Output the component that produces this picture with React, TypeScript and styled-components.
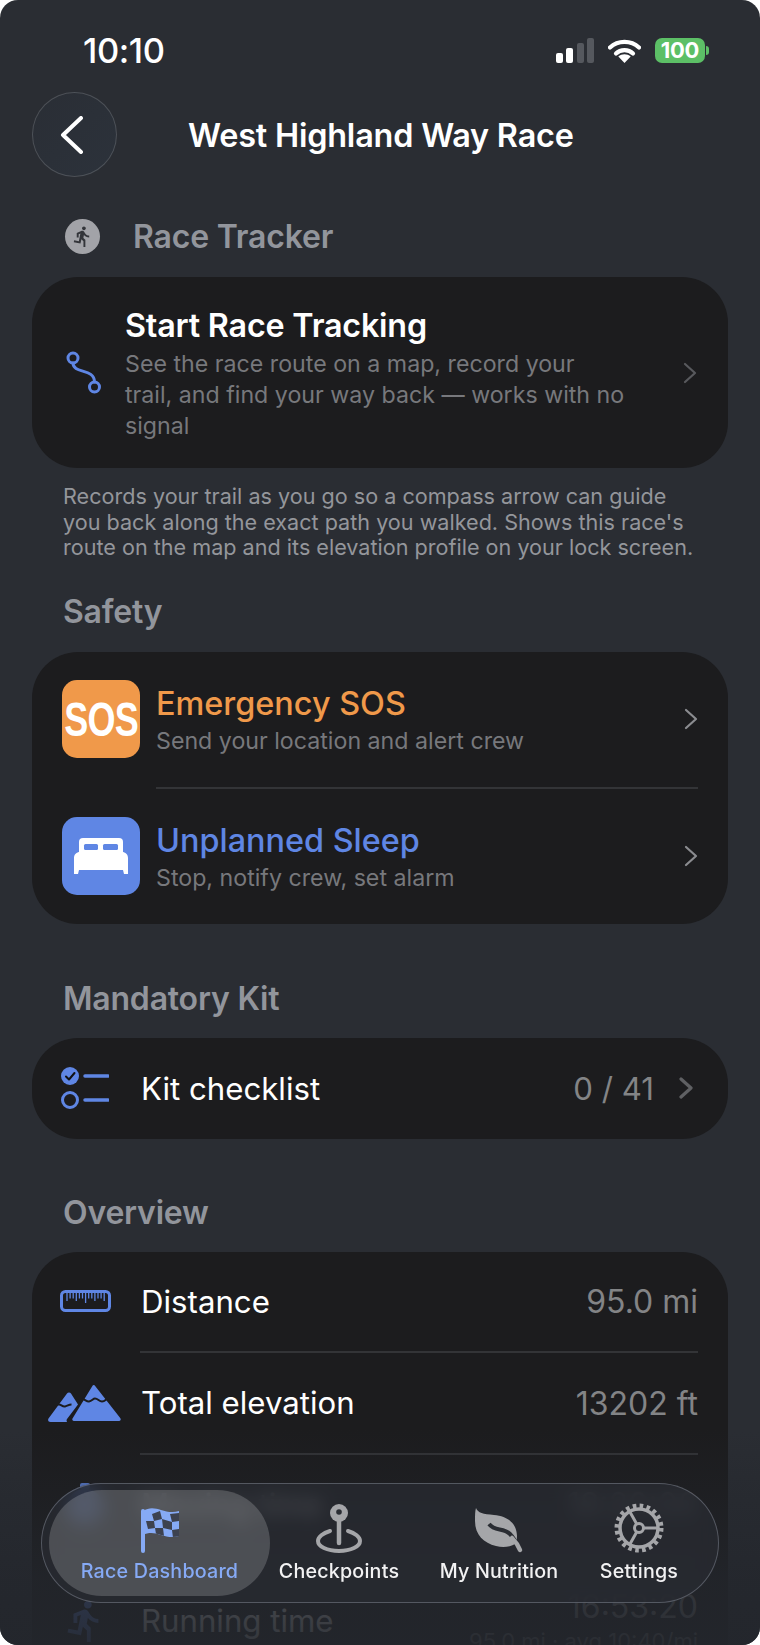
import React, { ReactNode } from 'react';
import styled, { createGlobalStyle } from 'styled-components';
import { MdDirectionsRun } from 'react-icons/md';

const BLUE = '#5f86e4';
const ORANGE = '#f0994a';
const TAB_GREY = '#a5a6a9';

const GlobalStyle = createGlobalStyle`
    html, body {
        margin: 0;
        background: #fff;
    }
    body {
        font-family: 'Inter', 'Liberation Sans', sans-serif;
        -webkit-font-smoothing: antialiased;
    }
`;

const Page = styled.div`
    position: relative;
    width: 760px;
    height: 1645px;
    padding: 0 32px;
    box-sizing: border-box;
    overflow: hidden;
    border-radius: 18px;
    background: #2a2d33;
`;

const StatusBar = styled.div`
    display: flex;
    align-items: center;
    justify-content: space-between;
    height: 100px;
    padding: 0 19px 0 51px;
`;

const Clock = styled.span`
    color: #fff;
    font-size: 34.5px;
    font-weight: 500;
    letter-spacing: -0.4px;
`;

const StatusIcons = styled.div`
    display: flex;
    align-items: center;
    gap: 14px;
`;

const Battery = styled.div`
    position: relative;
    display: flex;
    align-items: center;
    justify-content: center;
    width: 50px;
    height: 25px;
    margin-right: 4px;
    border-radius: 7px;
    background: #5cbf66;
    color: #fff;
    font-size: 22px;
    font-weight: 700;
    letter-spacing: -0.3px;

    &::after {
        content: '';
        position: absolute;
        right: -4px;
        top: 8px;
        width: 3px;
        height: 9px;
        border-radius: 0 3px 3px 0;
        background: #5cbf66;
    }
`;

const NavBar = styled.div`
    display: flex;
    align-items: center;
    gap: 71px;
    margin-top: -8px;
`;

const BackButton = styled.div`
    display: flex;
    align-items: center;
    justify-content: center;
    width: 85px;
    height: 85px;
    padding-right: 6px;
    box-sizing: border-box;
    border: 1.5px solid rgba(255, 255, 255, 0.16);
    border-radius: 50%;
    background: linear-gradient(135deg, #2a2e35, #2c323b);
`;

const Title = styled.h1`
    margin: 2px 0 0;
    color: #fff;
    font-size: 32.4px;
    font-weight: 600;
    letter-spacing: -0.2px;
`;

const SectionHeading = styled.h2<{ $top: number }>`
    display: flex;
    align-items: center;
    gap: 33px;
    height: 40px;
    margin: ${(p) => p.$top}px 0 0 31px;
    color: #92959c;
    font-size: 32px;
    font-weight: 600;
    letter-spacing: -0.2px;
`;

const RunnerBadge = styled.span`
    display: flex;
    align-items: center;
    justify-content: center;
    width: 35px;
    height: 35px;
    margin-left: 2px;
    border-radius: 50%;
    background: #a2a3a8;
    color: #33353a;
`;

const Card = styled.section<{ $top: number }>`
    margin-top: ${(p) => p.$top}px;
    border-radius: 46px;
    background: #1c1c1e;
`;

const TrackerRow = styled.div`
    display: flex;
    align-items: center;
    height: 191px;
    padding: 0 31px 0 32px;
    box-sizing: border-box;
`;

const TrackerText = styled.div`
    flex: 1;
    margin: 2px 0 0 21px;
`;

const TrackerTitle = styled.div`
    margin-bottom: 3px;
    color: #fff;
    font-size: 32.3px;
    font-weight: 600;
    line-height: 40px;
    letter-spacing: -0.2px;
`;

const Subtitle = styled.div`
    color: #77787c;
    font-size: 23.2px;
    line-height: 31px;
`;

const TrackerSubtitle = styled(Subtitle)`
    width: 500px;
`;

const Note = styled.p`
    width: 636px;
    margin: 16px 0 0 31px;
    color: #94969b;
    font-size: 21.6px;
    line-height: 25.6px;
`;

const SafetyRow = styled.div`
    display: flex;
    align-items: center;
    gap: 16px;
    height: 135px;
    padding: 0 30px;
    box-sizing: border-box;
`;

const AppIcon = styled.div<{ $bg: string }>`
    display: flex;
    flex: none;
    align-items: center;
    justify-content: center;
    width: 78px;
    height: 78px;
    overflow: hidden;
    border-radius: 15px;
    background: ${(p) => p.$bg};
`;

const SosLabel = styled.span`
    color: #fff;
    font-family: 'Liberation Sans', sans-serif;
    font-size: 48px;
    font-weight: 700;
    letter-spacing: -1px;
    transform: scaleX(0.75);
`;

const SafetyText = styled.div`
    flex: 1;
    padding-top: 3px;
`;

const SafetyTitle = styled.div<{ $color: string }>`
    margin-bottom: 2px;
    color: ${(p) => p.$color};
    font-size: 32.4px;
    font-weight: 500;
    line-height: 40px;
`;

const Divider = styled.div<{ $left: number }>`
    height: 2px;
    margin: 0 30px 0 ${(p) => p.$left}px;
    background: #333437;
`;

const ListRow = styled.div<{ $height: number }>`
    display: flex;
    align-items: center;
    height: ${(p) => p.$height}px;
    padding-right: 30px;
`;

const IconSlot = styled.div`
    display: flex;
    flex: none;
    align-items: center;
    justify-content: center;
    width: 109px;
    padding-right: 3px;
    box-sizing: border-box;
`;

const RowLabel = styled.div`
    flex: 1;
    padding-top: 1px;
    color: #fff;
    font-size: 31.2px;
    line-height: 40px;
`;

const RowValue = styled.div`
    padding-top: 1px;
    color: #838486;
    font-size: 32px;
    text-align: right;
`;

const KitValue = styled(RowValue)`
    font-size: 31.2px;
`;

const RowValueSub = styled.div`
    color: #838486;
    font-size: 22px;
    line-height: 30px;
    text-align: right;
`;

const KitChevron = styled.span`
    display: flex;
    margin: 0 5px 0 25px;
`;

const BottomFade = styled.div`
    position: absolute;
    left: 0;
    right: 0;
    bottom: 0;
    height: 215px;
    background: linear-gradient(
        to bottom,
        rgba(34, 37, 43, 0) 0%,
        rgba(34, 37, 43, 0.35) 30%,
        rgba(35, 38, 44, 0.82) 70%,
        rgba(35, 38, 44, 0.93) 100%
    );
`;

const TabBar = styled.nav`
    position: absolute;
    left: 41px;
    bottom: 42px;
    display: flex;
    align-items: center;
    width: 678px;
    height: 120px;
    padding: 0 7px;
    box-sizing: border-box;
    border: 1.5px solid rgba(150, 156, 170, 0.42);
    border-radius: 60px;
    background: rgba(40, 43, 50, 0.72);
    backdrop-filter: blur(9px);
`;

const TabItem = styled.div<{ $width: number; $active?: boolean }>`
    display: flex;
    flex: none;
    flex-direction: column;
    align-items: center;
    justify-content: flex-end;
    width: ${(p) => p.$width}px;
    height: 106px;
    padding-bottom: 13px;
    box-sizing: border-box;
    border-radius: 53px;
    background: ${(p) => (p.$active ? 'rgba(255, 255, 255, 0.18)' : 'transparent')};
    color: ${(p) => (p.$active ? '#86aaf5' : '#f2f2f3')};
    font-size: 19.7px;
    font-weight: 500;
    letter-spacing: 0.2px;
    white-space: nowrap;
`;

const TabIcon = styled.div`
    display: flex;
    align-items: flex-end;
    justify-content: center;
    height: 50px;
    margin-bottom: 6px;
`;

const Chevron = ({ color = '#58595d', width = 2.2 }: { color?: string; width?: number }) => (
    <svg width="14" height="22" viewBox="0 0 14 22" fill="none">
        <path d="M2 2l10 9-10 9" stroke={color} strokeWidth={width} strokeLinecap="round" strokeLinejoin="round" />
    </svg>
);

const SignalIcon = () => (
    <svg width="38" height="25" viewBox="0 0 38 25">
        <rect x="0" y="15" width="7" height="10" rx="2" fill="#fff" />
        <rect x="10" y="10" width="7" height="15" rx="2" fill="#fff" />
        <rect x="21" y="5" width="7" height="20" rx="2" fill="#55585e" />
        <rect x="31" y="0" width="7" height="25" rx="2" fill="#55585e" />
    </svg>
);

const WifiIcon = () => (
    <svg width="33" height="25" viewBox="0 0 33 25" fill="none">
        <path d="M2 9.500C10 2 23 2 31 9.500" stroke="#fff" strokeWidth="4.200" strokeLinecap="round" />
        <path d="M8 15.500C12.500 11 20.500 11 25 15.500" stroke="#fff" strokeWidth="4.200" strokeLinecap="round" />
        <path d="M16.500 25l-6.200-6.400c3.400-3 9-3 12.400 0z" fill="#fff" />
    </svg>
);

const RouteIcon = () => (
    <svg width="40" height="46" viewBox="0 0 40 46" fill="none" stroke={BLUE} strokeWidth="3">
        <circle cx="9" cy="8" r="5" />
        <circle cx="30.500" cy="37" r="5" />
        <path d="M9 13c0 11 21.500 5 21.500 19" strokeLinecap="round" />
    </svg>
);

const BedIcon = () => (
    <svg width="54" height="36" viewBox="0 0 54 36">
        <path d="M9 0h36a4 4 0 0 1 4 4v12H5V4a4 4 0 0 1 4-4z" fill="#fff" />
        <rect x="10" y="6" width="14" height="6" rx="1.500" fill={BLUE} />
        <rect x="29" y="6" width="15" height="6" rx="1.500" fill={BLUE} />
        <path d="M6 14h42c3.500 0 6 2.500 6 6v16h-4l-1-4H5l-1 4H0V20c0-3.500 2.500-6 6-6z" fill="#fff" />
    </svg>
);

const ChecklistIcon = () => (
    <svg width="48" height="44" viewBox="0 0 48 44" fill="none">
        <circle cx="9" cy="10" r="9" fill={BLUE} />
        <path d="M5 10.500l3 3 5.500-6.500" stroke="#111" strokeWidth="2" strokeLinecap="round" strokeLinejoin="round" />
        <circle cx="9" cy="34" r="7.500" stroke={BLUE} strokeWidth="3" />
        <path d="M24 10h23M24 34h23" stroke={BLUE} strokeWidth="3.500" strokeLinecap="round" />
    </svg>
);

const RulerIcon = () => (
    <svg width="51" height="22" viewBox="0 0 51 22" fill="none" stroke={BLUE}>
        <rect x="1.500" y="1.500" width="48" height="19" rx="4" strokeWidth="3" />
        {Array.from({ length: 13 }, (_, i) => (
            <path key={i} d={`M${7 + i * 3.1} 3v${i === 6 ? 10 : i % 3 === 0 ? 8 : 5.5}`} strokeWidth="1.300" />
        ))}
    </svg>
);

const MountainsIcon = () => (
    <svg width="74" height="38" viewBox="0 0 74 38">
        <path
            d="M19 9.500a2.500 2.500 0 0 1 4 0l7 11-11 14.500c-.8 1-.4 3 .5 3H2.500c-2 0-3-1.500-2-3.500z"
            fill={BLUE}
        />
        <path
            d="M43.500 1.500a2.500 2.500 0 0 1 4.500 0l25 32c1.500 2 .5 4.500-2 4.500H26c-2.500 0-3.500-2.500-2-4.500z"
            fill={BLUE}
            stroke="#1c1c1e"
            strokeWidth="2"
        />
        <path
            d="M33 16c3-2.500 5 2 8 1.500 3-.5 4-3 6-3 3 0 4 3 7 3s3.500-2 5-2.500M10 21c2-2 4 2 7 1.500 2-.5 4-2 6.500-2"
            fill="none"
            stroke="#1c1c1e"
            strokeWidth="2"
        />
    </svg>
);

const StopwatchIcon = () => (
    <svg width="38" height="42" viewBox="0 0 38 42">
        <rect x="14" y="0" width="10" height="6" rx="2" fill={BLUE} />
        <circle cx="19" cy="24" r="18" fill={BLUE} />
        <path d="M19 14v11l7 4" fill="none" stroke="#1c1c1e" strokeWidth="3" strokeLinecap="round" />
    </svg>
);

const FlagIcon = () => (
    <svg width="42" height="46" viewBox="0 0 42 46">
        <defs>
            <clipPath id="flag-cloth">
                <path d="M4 4c6-4 12-3 18-1s12 3 18 1v25c-6 2-12 1-18-1s-12-3-18 0z" />
            </clipPath>
        </defs>
        <path d="M4 4c6-4 12-3 18-1s12 3 18 1v25c-6 2-12 1-18-1s-12-3-18 0z" fill="#86aaf5" />
        <g clipPath="url(#flag-cloth)" fill="#3d4250">
            <path d="M13 7l8-3 2 8-8 2zM31 7l9-1v8l-7 1zM7 14l8 0 1 7-7 1zM23 12l10 3 0 8-9-2zM16 21l8 0 1 8-8-2zM33 23l7-1v8l-6 1z" />
        </g>
        <path d="M4 4v40" stroke="#86aaf5" strokeWidth="4" strokeLinecap="round" />
    </svg>
);

const PinIcon = () => (
    <svg width="46" height="49" viewBox="0 0 46 49" fill="none">
        <path d="M14 27C7 29 2 33 2 37c0 5.500 9 10 21 10s21-4.500 21-10c0-4-5-8-12-10" stroke={TAB_GREY} strokeWidth="4" strokeLinecap="round" />
        <path d="M23 14v25" stroke={TAB_GREY} strokeWidth="4.500" strokeLinecap="round" />
        <circle cx="23" cy="9" r="9" fill={TAB_GREY} />
        <circle cx="23" cy="8" r="2.800" fill="#2a2d33" />
    </svg>
);

const LeafIcon = () => (
    <svg width="50" height="46" viewBox="0 0 50 46" fill="none">
        <path
            d="M2 1c2 5 7 6 18 7 14 1 23 9 23 21 0 4-1 6-2 8-5 3-12 4-19 2C10 36 1 28 1 14 1 8 1 4 2 1z"
            fill={TAB_GREY}
        />
        <path d="M15 17c6 8 14 3 21 10 3 3 6 8 9 14" stroke="#2a2d33" strokeWidth="4" />
        <path d="M38 31c3 3 6 7 8 12" stroke={TAB_GREY} strokeWidth="4.500" strokeLinecap="round" />
    </svg>
);

const GearIcon = () => (
    <svg width="50" height="50" viewBox="0 0 50 50" fill="none" stroke={TAB_GREY}>
        <circle cx="25" cy="25" r="19" strokeWidth="3.500" />
        <circle cx="25" cy="25" r="22" strokeWidth="5" strokeDasharray="3.600 3.310" />
        <circle cx="25" cy="25" r="4.500" strokeWidth="3" />
        <path d="M29.500 25H44M22.700 21l-7-12.500M22.700 29l-7 12.500" strokeWidth="3" />
    </svg>
);

interface SafetyItemProps {
    icon: ReactNode;
    iconBg: string;
    color: string;
    title: string;
    subtitle: string;
}

const SafetyItem = ({ icon, iconBg, color, title, subtitle }: SafetyItemProps) => (
    <SafetyRow>
        <AppIcon $bg={iconBg}>{icon}</AppIcon>
        <SafetyText>
            <SafetyTitle $color={color}>{title}</SafetyTitle>
            <Subtitle>{subtitle}</Subtitle>
        </SafetyText>
        <Chevron color="#8b8c90" />
    </SafetyRow>
);

const App = () => (
    <Page>
        <GlobalStyle />
        <StatusBar>
            <Clock>10:10</Clock>
            <StatusIcons>
                <SignalIcon />
                <WifiIcon />
                <Battery>100</Battery>
            </StatusIcons>
        </StatusBar>

        <NavBar>
            <BackButton>
                <svg width="24" height="38" viewBox="0 0 24 38" fill="none">
                    <path d="M21 2L3 19l18 17" stroke="#fff" strokeWidth="4" strokeLinecap="round" strokeLinejoin="round" />
                </svg>
            </BackButton>
            <Title>West Highland Way Race</Title>
        </NavBar>

        <SectionHeading $top={39}>
            <RunnerBadge>
                <MdDirectionsRun size={23} />
            </RunnerBadge>
            Race Tracker
        </SectionHeading>

        <Card $top={21}>
            <TrackerRow>
                <RouteIcon />
                <TrackerText>
                    <TrackerTitle>Start Race Tracking</TrackerTitle>
                    <TrackerSubtitle>
                        See the race route on a map, record your trail, and find your way back — works with no signal
                    </TrackerSubtitle>
                </TrackerText>
                <Chevron />
            </TrackerRow>
        </Card>

        <Note>
            Records your trail as you go so a compass arrow can guide you back along the exact path you walked. Shows
            this race's route on the map and its elevation profile on your lock screen.
        </Note>

        <SectionHeading $top={31}>Safety</SectionHeading>

        <Card $top={20}>
            <SafetyItem
                icon={<SosLabel>SOS</SosLabel>}
                iconBg={ORANGE}
                color={ORANGE}
                title="Emergency SOS"
                subtitle="Send your location and alert crew"
            />
            <Divider $left={124} />
            <SafetyItem
                icon={<BedIcon />}
                iconBg={BLUE}
                color={BLUE}
                title="Unplanned Sleep"
                subtitle="Stop, notify crew, set alarm"
            />
        </Card>

        <SectionHeading $top={55}>Mandatory Kit</SectionHeading>

        <Card $top={19}>
            <ListRow $height={101}>
                <IconSlot>
                    <ChecklistIcon />
                </IconSlot>
                <RowLabel>Kit checklist</RowLabel>
                <KitValue>0 / 41</KitValue>
                <KitChevron>
                    <Chevron width={3.2} color="#5f6063" />
                </KitChevron>
            </ListRow>
        </Card>

        <SectionHeading $top={54}>Overview</SectionHeading>

        <Card $top={19}>
            <ListRow $height={99}>
                <IconSlot>
                    <RulerIcon />
                </IconSlot>
                <RowLabel>Distance</RowLabel>
                <RowValue>95.0 mi</RowValue>
            </ListRow>
            <Divider $left={108} />
            <ListRow $height={100}>
                <IconSlot>
                    <MountainsIcon />
                </IconSlot>
                <RowLabel>Total elevation</RowLabel>
                <RowValue>13202 ft</RowValue>
            </ListRow>
            <Divider $left={108} />
            <ListRow $height={99}>
                <IconSlot>
                    <StopwatchIcon />
                </IconSlot>
                <RowLabel>Moving time</RowLabel>
                <RowValue>18:20:00</RowValue>
            </ListRow>
            <Divider $left={108} />
            <ListRow $height={130}>
                <IconSlot>
                    <MdDirectionsRun size={46} color={BLUE} />
                </IconSlot>
                <RowLabel>Running time</RowLabel>
                <div>
                    <RowValue>16:53:20</RowValue>
                    <RowValueSub>95.0 mi · avg 10:40/mi</RowValueSub>
                </div>
            </ListRow>
        </Card>

        <BottomFade />

        <TabBar>
            <TabItem $width={221} $active>
                <TabIcon>
                    <FlagIcon />
                </TabIcon>
                Race Dashboard
            </TabItem>
            <TabItem $width={138}>
                <TabIcon>
                    <PinIcon />
                </TabIcon>
                Checkpoints
            </TabItem>
            <TabItem $width={182}>
                <TabIcon>
                    <LeafIcon />
                </TabIcon>
                My Nutrition
            </TabItem>
            <TabItem $width={98}>
                <TabIcon>
                    <GearIcon />
                </TabIcon>
                Settings
            </TabItem>
        </TabBar>
    </Page>
);

export default App;
